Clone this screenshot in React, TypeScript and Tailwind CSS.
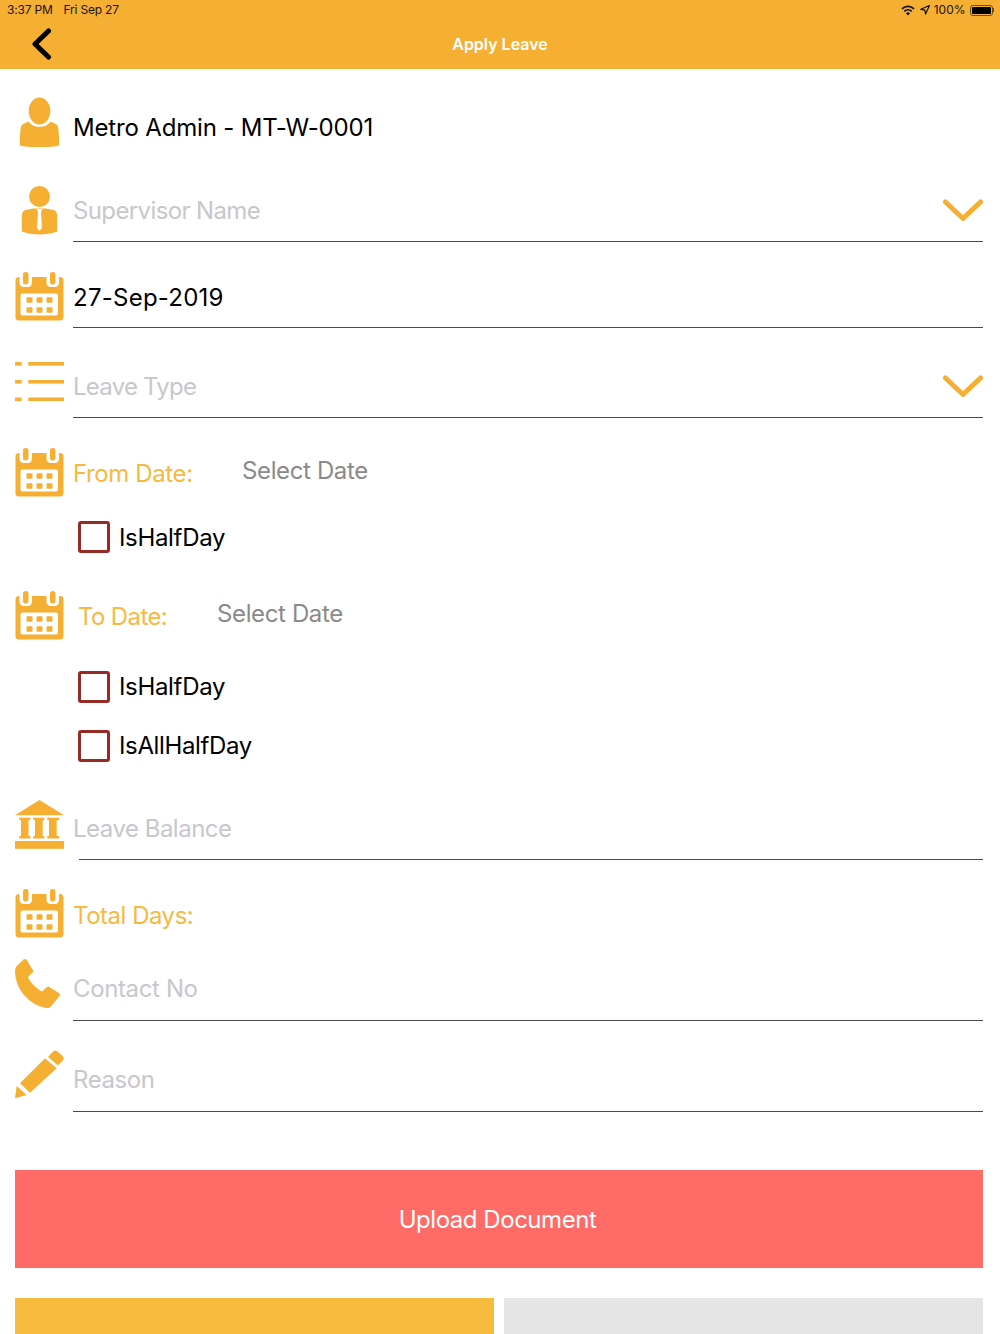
import React from 'react';

const ORANGE = '#f5af33';

const PersonIcon = () => (
  <svg width="49" height="50" viewBox="0 0 49 50" className="block">
    <ellipse cx="24.500" cy="14" rx="10.800" ry="13.500" fill={ORANGE} />
    <path fill={ORANGE} d="M13.500 24.500c2 3.300 6 5.300 11 5.300s9-2 11-5.300c3 1.500 6 2.300 7 4 1.200 2 1.700 11 1.700 20-5.500 1.200-12 1.800-19.700 1.800s-14.200-.6-19.700-1.800c0-9 .5-18 1.700-20 1-1.700 4-2.500 7-4z" />
  </svg>
);

const SupervisorIcon = () => (
  <svg width="49" height="49" viewBox="0 0 49 49" className="block">
    <circle cx="24.500" cy="10.500" r="10.500" fill={ORANGE} />
    <path fill={ORANGE} d="M18 22.500l-7.500 1.500C8 24.800 6.800 27 6.800 30v15.500C12 47.500 18 48.500 24.500 48.500s12.500-1 17.800-3V30c0-3-1.200-5.200-3.700-6L31 22.500z" />
    <path fill="#fff" d="M22 23h5l-1 3.500 1 15.500-2.500 3-2.500-3 1-15.500z" />
  </svg>
);

const CalendarIcon = () => (
  <svg width="49" height="49" viewBox="0 0 49 49" className="block">
    <rect x="0.500" y="5" width="48" height="43.500" rx="3.500" fill={ORANGE} />
    <path fill="#fff" d="M4.500 0h12.500v11c0 2.200-1.800 4-4 4h-4.500c-2.200 0-4-1.800-4-4zM31.500 0h12.500v11c0 2.200-1.800 4-4 4h-4.500c-2.200 0-4-1.800-4-4z" />
    <rect x="8" y="0" width="5.500" height="12.500" rx="2.700" fill={ORANGE} />
    <rect x="35" y="0" width="5.500" height="12.500" rx="2.700" fill={ORANGE} />
    <rect x="5.500" y="21.500" width="37.500" height="22" rx="2" fill="#fff" />
    <rect x="11.500" y="25.300" width="6" height="5.500" rx="0.800" fill={ORANGE} />
    <rect x="21.500" y="25.300" width="6" height="5.500" rx="0.800" fill={ORANGE} />
    <rect x="31.500" y="25.300" width="6" height="5.500" rx="0.800" fill={ORANGE} />
    <rect x="11.500" y="35.300" width="6" height="5.500" rx="0.800" fill={ORANGE} />
    <rect x="21.500" y="35.300" width="6" height="5.500" rx="0.800" fill={ORANGE} />
    <rect x="31.500" y="35.300" width="6" height="5.500" rx="0.800" fill={ORANGE} />
  </svg>
);

const ListIcon = () => (
  <svg width="49" height="41" viewBox="0 0 49 41" className="block">
    <g fill={ORANGE}>
      <rect x="0" y="0" width="6.700" height="3.600" />
      <rect x="13.300" y="0" width="35.700" height="3.600" />
      <rect x="0" y="18" width="6.700" height="3.600" />
      <rect x="13.300" y="18" width="35.700" height="3.600" />
      <rect x="0" y="35.500" width="6.700" height="3.600" />
      <rect x="13.300" y="35.500" width="35.700" height="3.600" />
    </g>
  </svg>
);

const BankIcon = () => (
  <svg width="49" height="49" viewBox="0 0 49 49" className="block">
    <g fill={ORANGE}>
      <path d="M24.500 0L49 15.300H0z" />
      <rect x="4.300" y="17.700" width="11" height="2.500" />
      <rect x="18.300" y="17.700" width="11" height="2.500" />
      <rect x="32.300" y="17.700" width="11.700" height="2.500" />
      <rect x="6" y="20" width="7.500" height="16" />
      <rect x="20" y="20" width="7.700" height="16" />
      <rect x="34" y="20" width="7.700" height="16" />
      <rect x="4.300" y="36" width="11" height="2.500" />
      <rect x="18.300" y="36" width="11" height="2.500" />
      <rect x="32.300" y="36" width="11.700" height="2.500" />
      <rect x="0" y="41" width="49" height="7.800" />
    </g>
  </svg>
);

const PhoneIcon = () => (
  <svg width="49" height="49" viewBox="0 0 49 49" className="block">
    <path fill={ORANGE} d="M8.500.6c1.200-.9 2.500-.7 3.300.5l6 10c.6 1.100.4 2-.5 2.900l-3.600 3.300c-.6.600-.7 1.300-.3 2 3 5 7.500 9.800 12.500 12.800.7.400 1.400.3 2-.3l3.300-3.200c.9-.9 2-1.100 3-.5l9.800 6c1.200.8 1.300 2 .4 3-2.500 3.400-5.800 7.100-8 9.900-1.300 1.700-3 2.300-5.300 2C22 47.800 12 41 6 32 2.500 26.500.2 20 0 12.500 0 9.700.8 8 2.500 6.300z" />
  </svg>
);

const PencilIcon = () => (
  <svg width="49" height="49" viewBox="0 0 49 49" className="block">
    <g fill={ORANGE}>
      <path d="M33 6.800l5-5c1.500-1.500 3-1.500 4.500-.4l5 4.600c1.500 1.500 1.500 3 .3 4.400l-5 5z" />
      <path d="M30 8.300l11.700 10L15 42.700 5 33.300z" />
      <path d="M1.700 36l10 9L0 48.300z" />
    </g>
  </svg>
);

const Chevron = () => (
  <svg width="40" height="23" viewBox="0 0 40 23" className="block">
    <path d="M2.500 3L20 19.500 37.500 3" fill="none" stroke={ORANGE} strokeWidth="5" strokeLinecap="round" strokeLinejoin="round" />
  </svg>
);

const Check = ({ label, className, labelClass }: { label: string; className: string; labelClass: string }) => (
  <div className={`flex items-center ml-[78px] h-[32px] ${className}`}>
    <div className="w-[32px] h-[32px] rounded-[3px] border-[3px] border-[#972b23]" />
    <span className={`ml-[9px] pt-[2px] text-[24px] text-black ${labelClass}`}>{label}</span>
  </div>
);

const Field = ({
  icon,
  text,
  textClass,
  chevron,
  className,
  height,
  iconTop,
}: {
  icon: React.ReactNode;
  text: string;
  textClass: string;
  chevron?: boolean;
  className: string;
  height: string;
  iconTop: string;
}) => (
  <div className={`flex ml-[15px] mr-[17px] ${className}`}>
    <div className={`w-[49px] shrink-0 ${iconTop}`}>{icon}</div>
    <div className={`ml-[9px] flex-1 flex items-center justify-between border-b-[1.5px] border-[#4a4a4a] ${height}`}>
      <span className={`pt-[2px] text-[24px] ${textClass}`}>{text}</span>
      {chevron && <Chevron />}
    </div>
  </div>
);

export default function App() {
  return (
    <div className="h-[1334px] w-[1000px] overflow-hidden bg-white font-['Inter','Liberation_Sans',sans-serif]">
      <header className="relative h-[69px] bg-[#f5af33]">
        <div className="flex items-center justify-between h-[20px] pl-[7px] pr-[6px] text-[12px] tracking-[-0.2px] text-[#1a1208]">
          <div className="flex gap-[11px]">
            <span>3:37 PM</span>
            <span>Fri Sep 27</span>
          </div>
          <div className="flex items-center gap-[4px]">
            <svg width="14" height="11" viewBox="0 0 14 11" className="mr-[1px]">
              <path d="M7 10.500L5 8.300a2.900 2.900 0 0 1 4 0z" fill="#111" />
              <path d="M3.300 6.400a5.400 5.400 0 0 1 7.400 0M1 3.800a8.800 8.800 0 0 1 12 0" fill="none" stroke="#111" strokeWidth="1.700" />
            </svg>
            <svg width="10" height="10" viewBox="0 0 10 10">
              <path d="M9.500.5L.8 4.300l4 .8.800 4z" fill="none" stroke="#111" strokeWidth="1.200" strokeLinejoin="round" />
            </svg>
            <span className="tracking-normal">100%</span>
            <div className="flex items-center">
              <div className="w-[23px] h-[11px] rounded-[3px] border border-[#6b4d14] p-[1px]">
                <div className="h-full w-full rounded-[1px] bg-black" />
              </div>
              <div className="w-[1.5px] h-[4px] bg-[#6b4d14]" />
            </div>
          </div>
        </div>
        <svg width="22" height="34" viewBox="0 0 22 34" className="absolute left-[31px] top-[28px]">
          <path d="M17.500 3L4 16 17.500 29" fill="none" stroke="#000" strokeWidth="5" strokeLinecap="round" strokeLinejoin="round" />
        </svg>
        <div className="absolute inset-x-0 top-[32px] text-center text-[16px] font-semibold text-white">Apply Leave</div>
      </header>

      <main className="pt-[28px]">
        <div className="flex ml-[15px] mr-[17px]">
          <div className="w-[49px] shrink-0"><PersonIcon /></div>
          <div className="ml-[9px] pt-[2px] h-[60px] flex items-center text-[24px] tracking-[-0.17px] text-black">Metro Admin - MT-W-0001</div>
        </div>

        <Field className="mt-[22px]" height="h-[63px]" iconTop="mt-[7px]" icon={<SupervisorIcon />} text="Supervisor Name" textClass="tracking-[-0.62px] text-[#c7c7cd]" chevron />
        <Field className="mt-[24px]" height="h-[62px]" iconTop="mt-[6px]" icon={<CalendarIcon />} text="27-Sep-2019" textClass="tracking-[0.25px] text-black" />
        <Field className="mt-[27px]" height="h-[63px]" iconTop="mt-[7px]" icon={<ListIcon />} text="Leave Type" textClass="tracking-[-0.76px] text-[#c7c7cd]" chevron />

        <div className="flex items-center h-[49px] mt-[30px] ml-[15px]">
          <CalendarIcon />
          <span className="ml-[9px] pt-[2px] w-[169px] text-[24px] tracking-[-0.39px] text-[#f9b83f]">From Date:</span>
          <span className="mb-[6px] pt-[2px] text-[24px] tracking-[-0.37px] text-[#8a8a8a]">Select Date</span>
        </div>
        <Check label="IsHalfDay" className="mt-[24px]" labelClass="tracking-[-0.33px]" />

        <div className="flex items-center h-[49px] mt-[38px] ml-[15px]">
          <CalendarIcon />
          <span className="ml-[14px] pt-[2px] w-[139px] text-[24px] tracking-[-0.63px] text-[#f9b83f]">To Date:</span>
          <span className="mb-[6px] pt-[2px] text-[24px] tracking-[-0.37px] text-[#8a8a8a]">Select Date</span>
        </div>
        <Check label="IsHalfDay" className="mt-[31px]" labelClass="mb-[2px] tracking-[-0.33px]" />
        <Check label="IsAllHalfDay" className="mt-[27px]" labelClass="mb-[2px] tracking-[-0.36px]" />

        <div className="flex mt-[35px] ml-[15px] mr-[17px]">
          <div className="w-[49px] shrink-0 mt-[3px]"><BankIcon /></div>
          <div className="ml-[15px] flex-1 h-[63px] flex items-center border-b-[1.5px] border-[#4a4a4a]">
            <span className="-ml-[6px] pt-[2px] text-[24px] tracking-[-0.5px] text-[#c7c7cd]">Leave Balance</span>
          </div>
        </div>

        <div className="flex items-center h-[49px] mt-[29px] ml-[15px]">
          <CalendarIcon />
          <span className="ml-[9px] pt-[4px] text-[24px] tracking-[-0.48px] text-[#f9b83f]">Total Days:</span>
        </div>

        <Field className="mt-[20px]" height="h-[63px]" iconTop="mt-[1px]" icon={<PhoneIcon />} text="Contact No" textClass="mb-[2px] tracking-[-0.37px] text-[#c7c7cd]" />
        <Field className="mt-[28px]" height="h-[63px]" iconTop="mt-[1px]" icon={<PencilIcon />} text="Reason" textClass="mb-[2px] tracking-[-0.42px] text-[#c7c7cd]" />

        <button className="block mt-[58px] ml-[15px] w-[968px] h-[98px] pt-[2px] pr-[3px] bg-[#ff6b66] text-[24px] tracking-[-0.47px] text-white">Upload Document</button>

        <div className="grid grid-cols-2 gap-[10px] mt-[30px] ml-[15px] w-[968px] h-[36px]">
          <div className="bg-[#f7bb3e]" />
          <div className="bg-[#e5e5e5]" />
        </div>
      </main>
    </div>
  );
}
